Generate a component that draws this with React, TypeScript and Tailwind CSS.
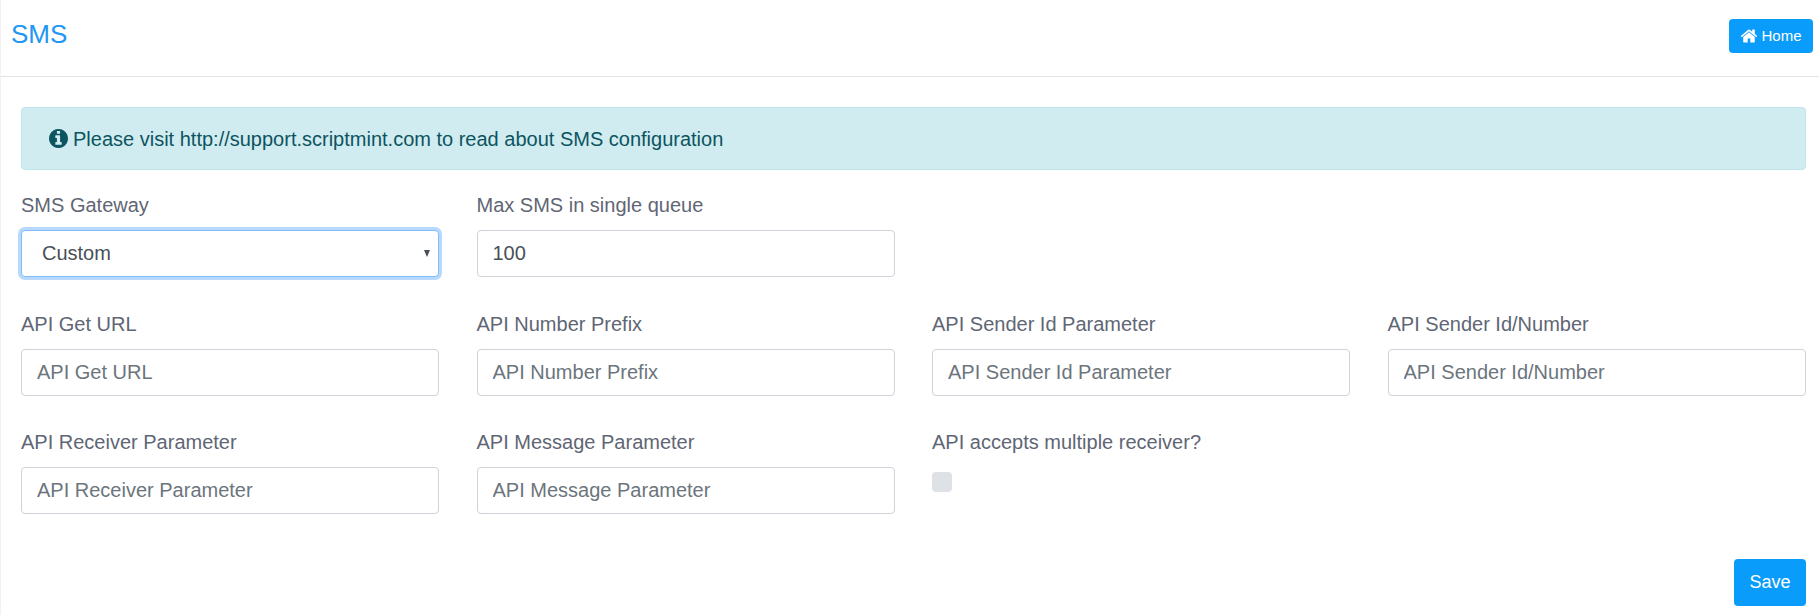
const labelCls = "block text-[20px] leading-[30px] text-[#5f6675] mb-[10px]";
const inputCls =
  "block w-full h-[47px] px-[15px] rounded-[4px] border border-[#ced4da] bg-white text-[20px] text-[#495057] placeholder:text-[#6c757d] outline-none";

function HomeIcon() {
  return (
    <svg viewBox="0 0 1792 1792" className="w-[18px] h-[18px]" fill="currentColor">
      <path d="M1472 992v480q0 26-19 45t-45 19h-384v-384h-256v384h-384q-26 0-45-19t-19-45v-480q0-1 .5-3t.5-3l575-474 575 474q1 2 1 6zm223-69l-62 74q-8 9-21 11h-3q-13 0-21-7l-692-577-692 577q-12 8-24 7-13-2-21-11l-62-74q-8-10-7-23.500t11-21.500l719-599q32-26 76-26t76 26l244 204v-195q0-14 9-23t23-9h192q14 0 23 9t9 23v408l219 182q10 8 11 21.500t-7 23.500z" />
    </svg>
  );
}

function InfoIcon() {
  return (
    <svg viewBox="128 128 1536 1536" className="w-[19px] h-[19px]" fill="currentColor">
      <path d="M1152 1376v-160q0-14-9-23t-23-9h-96v-512q0-14-9-23t-23-9h-320q-14 0-23 9t-9 23v160q0 14 9 23t23 9h96v320h-96q-14 0-23 9t-9 23v160q0 14 9 23t23 9h448q14 0 23-9t9-23zm-128-896v-160q0-14-9-23t-23-9h-192q-14 0-23 9t-9 23v160q0 14 9 23t23 9h192q14 0 23-9t9-23zm640 416q0 209-103 385.500t-279.500 279.500-385.500 103-385.500-103-279.500-279.500-103-385.500 103-385.500 279.500-279.500 385.500-103 385.500 103 279.500 279.500 103 385.500z" />
    </svg>
  );
}

function Field({ label, value }: { label: string; value?: string }) {
  return (
    <div>
      <label className={labelCls}>{label}</label>
      <input className={inputCls} placeholder={label} defaultValue={value} />
    </div>
  );
}

export default function App() {
  return (
    <div className="min-h-[615px] bg-white border-l border-[#f2f2f2] font-['Liberation_Sans',Arial,sans-serif]">
      <div className="h-[77px] flex items-start justify-between border-b border-[#e3e3e3] pl-[10px] pr-[6px]">
        <h1 className="mt-[18px] text-[26px] leading-[32px] text-[#2196f3]">SMS</h1>
        <button className="mt-[19px] h-[34px] w-[84px] flex items-center justify-center gap-[3px] rounded-[4px] bg-[#0a9cfa] text-[15px] text-white">
          <HomeIcon />
          Home
        </button>
      </div>

      <div className="pt-[30px] pl-[20px] pr-[13px]">
        <div className="h-[63px] flex items-center gap-[5px] pl-[27px] rounded-[4px] border border-[#bee5eb] bg-[#d1ecf1] text-[20px] text-[#0c5460]">
          <InfoIcon />
          Please visit http://support.scriptmint.com to read about SMS configuration
        </div>

        <div className="mt-[20px] grid grid-cols-[418px_418px_418px_1fr] gap-x-[37.5px] gap-y-[31px]">
          <div className="mb-[1px]">
            <label className={labelCls}>SMS Gateway</label>
            <div className="relative">
              <select className="block w-full h-[47px] appearance-none rounded-[4px] border border-[#80bdff] bg-white shadow-[0_0_0_3px_#b8d9fb] pl-[20px] pb-[2px] text-[20px] text-[#495057] outline-none">
                <option>Custom</option>
              </select>
              <span className="absolute right-[9px] top-[20px] w-0 h-0 border-x-[3.5px] border-x-transparent border-t-[7px] border-t-[#495057]" />
            </div>
          </div>
          <Field label="Max SMS in single queue" value="100" />
          <div />
          <div />

          <Field label="API Get URL" />
          <Field label="API Number Prefix" />
          <Field label="API Sender Id Parameter" />
          <Field label="API Sender Id/Number" />

          <Field label="API Receiver Parameter" />
          <Field label="API Message Parameter" />
          <div>
            <label className={labelCls}>API accepts multiple receiver?</label>
            <div className="mt-[15px] w-[20px] h-[20px] rounded-[4px] bg-[#dee2e6]" />
          </div>
        </div>

        <div className="mt-[45px] flex justify-end">
          <button className="w-[72px] h-[47px] rounded-[4px] bg-[#0a9cfa] text-[18px] text-white">Save</button>
        </div>
      </div>
    </div>
  );
}
